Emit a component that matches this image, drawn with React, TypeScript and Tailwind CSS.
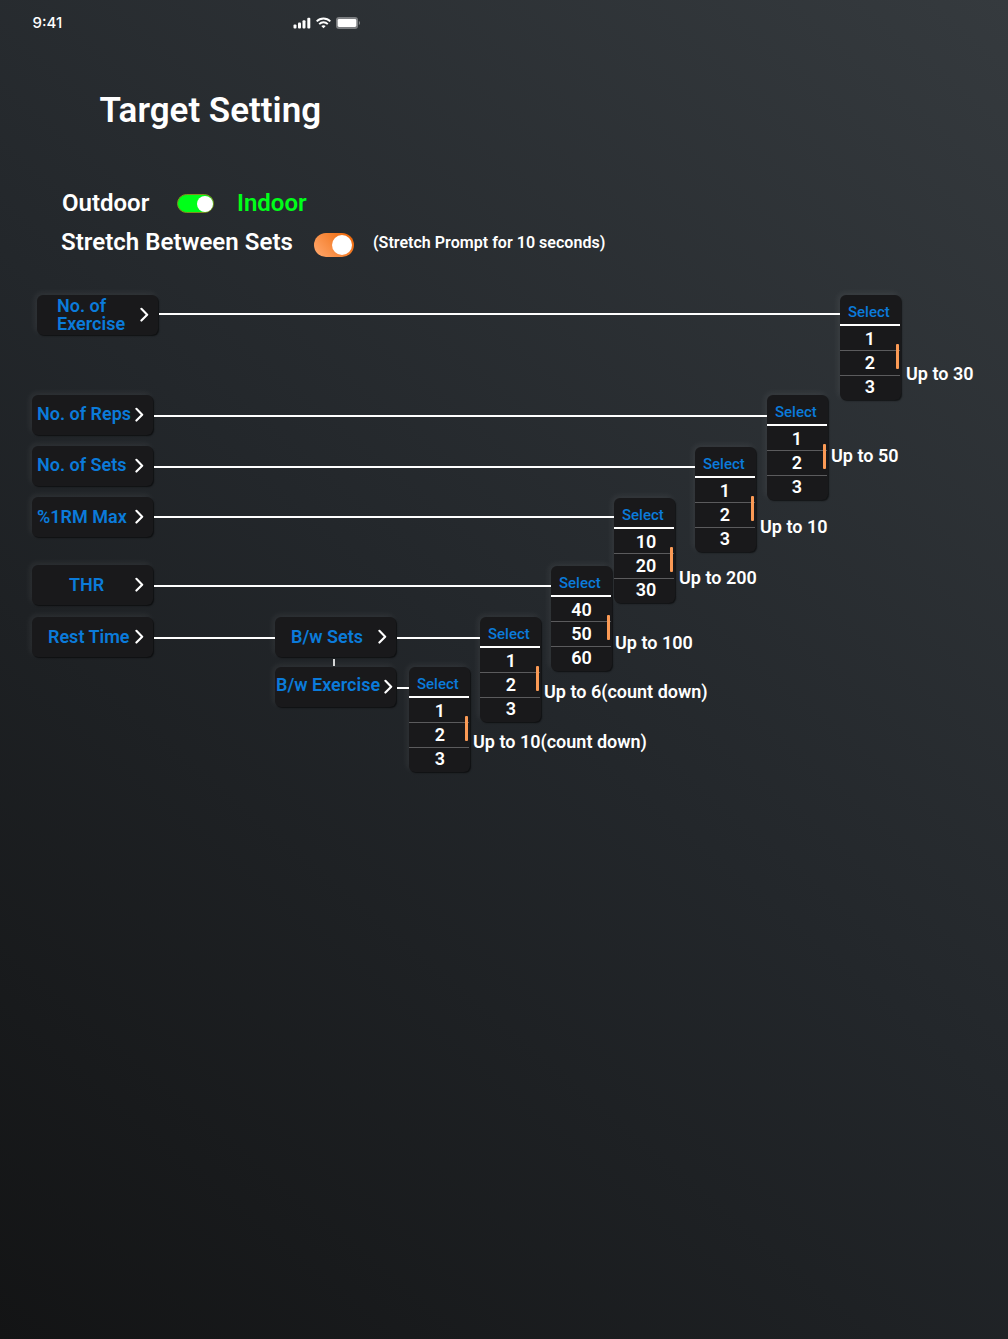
import React from "react";

const NODE_SHADOW = "shadow-[1px_1px_1.5px_rgba(0,0,0,0.65),-2px_-2px_6px_rgba(255,255,255,0.07)]";

function Chevron() {
  return (
    <svg width="9" height="15" viewBox="0 0 9 15" fill="none" className="shrink-0">
      <path d="M1.4 1.8L7.2 7.7L1.4 13.6" stroke="#fff" strokeWidth="2.1" strokeLinecap="round" strokeLinejoin="round" />
    </svg>
  );
}

type ButtonProps = { label: React.ReactNode; textClass: string; chevronClass?: string };

function NodeButton({ label, textClass, chevronClass = "mt-3 mr-[9px]" }: ButtonProps) {
  return (
    <button
      className={`flex h-10 w-[121px] shrink-0 items-start justify-between rounded-[6px] bg-[#19191b] text-left text-[18px] leading-[18px] font-semibold whitespace-nowrap text-[#0b7bda] ${NODE_SHADOW}`}
    >
      <span className={textClass}>{label}</span>
      <span className={chevronClass}>
        <Chevron />
      </span>
    </button>
  );
}

function Line({ className }: { className: string }) {
  return <div className={`h-[2px] shrink-0 bg-white ${className}`} />;
}

function SelectCard({ values, className = "" }: { values: number[]; className?: string }) {
  return (
    <div
      className={`relative h-[105px] w-[61px] shrink-0 rounded-[6px] bg-[#19191b] ${NODE_SHADOW} ${className}`}
    >
      <div className="h-[31px] w-[60px] border-b-2 border-white pt-[9px] pl-2 text-[15px] leading-4 font-medium text-[#0b7bda]">
        Select
      </div>
      <ul className="w-[60px] text-center text-[18px] font-semibold text-white">
        <li className="h-[25px] border-b border-[#5b5b5d] leading-[26px]">{values[0]}</li>
        <li className="h-[25px] border-b border-[#5b5b5d] leading-6">{values[1]}</li>
        <li className="h-6 leading-[22px]">{values[2]}</li>
      </ul>
      <div className="absolute top-[49px] left-[56px] h-[25px] w-[2.5px] rounded-[1px] bg-[#fb9a55]" />
    </div>
  );
}

function Limit({ children, className }: { children: string; className: string }) {
  return (
    <span className={`shrink-0 text-[18px] leading-5 font-semibold whitespace-nowrap text-white ${className}`}>
      {children}
    </span>
  );
}

export default function App() {
  return (
    <div className="h-[1339px] w-[1008px] overflow-hidden bg-[linear-gradient(220deg,#353a3e_0%,#23272b_50%,#131415_100%)] font-['Roboto',sans-serif] text-white">
      <header className="flex h-[93px] pl-[32.5px]">
        <span className="mt-[14px] w-[260.5px] font-['Inter',sans-serif] text-[15px] leading-[18px] font-medium">
          9:41
        </span>
        <div className="mt-[17px] flex h-3 items-center gap-[5px]">
          <svg width="18" height="12" viewBox="0 0 18 12" fill="#fff">
            <rect x="0.5" y="7.5" width="3" height="4" rx="1" />
            <rect x="5" y="5.5" width="3" height="6" rx="1" />
            <rect x="9.5" y="3.2" width="3" height="8.3" rx="1" />
            <rect x="14.3" y="0.7" width="3" height="10.8" rx="1" />
          </svg>
          <svg width="15" height="12" viewBox="0 0 15 12" fill="none" stroke="#fff" strokeWidth="1.9">
            <path d="M0.7 4.4C4.4 0.6 10.6 0.6 14.3 4.4" />
            <path d="M3.2 7.1C5.6 4.7 9.4 4.7 11.8 7.1" />
            <path d="M7.5 11.2L5.3 9C6.5 7.9 8.5 7.9 9.7 9Z" fill="#fff" stroke="none" />
          </svg>
          <svg width="25" height="12" viewBox="0 0 25 12" fill="none">
            <rect x="0" y="0" width="22" height="12" rx="3" fill="#fff" fillOpacity="0.38" />
            <rect x="1.7" y="2" width="18.6" height="8" rx="1.4" fill="#fff" />
            <path d="M22.8 4V8C23.6 7.7 24 6.9 24 6S23.6 4.3 22.8 4Z" fill="#fff" fillOpacity="0.4" />
          </svg>
        </div>
      </header>

      <h1 className="h-[98px] pl-[99.5px] text-[35px] leading-9 font-semibold">Target Setting</h1>

      <section className="flex h-[103px] flex-col text-[24px] leading-6 font-semibold">
        <div className="flex h-[39px] pl-[62px]">
          <span className="w-[115px]">Outdoor</span>
          <button className="mt-[3px] flex h-[19px] w-[37px] items-center justify-end rounded-full border border-[#7f8f1d] bg-[#00ff19] pr-0">
            <span className="size-4 rounded-full bg-white" />
          </button>
          <span className="ml-[23px] text-[#00ff19]">Indoor</span>
        </div>
        <div className="flex pl-[61px]">
          <span className="w-[253px] tracking-[0.04px]">Stretch Between Sets</span>
          <button className="mt-[3px] flex h-6 w-10 items-center justify-end rounded-full bg-[linear-gradient(50deg,#ffa365_10%,#ee6a0c_90%)] pr-[2px]">
            <span className="size-5 rounded-full bg-white" />
          </button>
          <span className="mt-px ml-[19px] text-[16px] tracking-[0.03px]">(Stretch Prompt for 10 seconds)</span>
        </div>
      </section>

      <main className="flex flex-col pt-px pl-8">
        <div className="flex h-[100px] items-start pl-[5px]">
          <NodeButton
            label={
              <>
                No. of
                <br />
                Exercise
              </>
            }
            textClass="mt-[2px] ml-5"
          />
          <Line className="mt-[18px] ml-px w-[681px]" />
          <SelectCard values={[1, 2, 3]} />
          <Limit className="mt-[69px] ml-[5px]">Up to 30</Limit>
        </div>
        <div className="flex h-[51px] items-start">
          <NodeButton label="No. of Reps" textClass="mt-[10px] ml-[5px]" />
          <Line className="mt-5 ml-px w-[613px]" />
          <SelectCard values={[1, 2, 3]} />
          <Limit className="mt-[51px] ml-[3px]">Up to 50</Limit>
        </div>
        <div className="flex h-[51px] items-start">
          <NodeButton label="No. of Sets" textClass="mt-[10px] ml-[5px]" />
          <Line className="mt-5 ml-px w-[541px]" />
          <SelectCard values={[1, 2, 3]} className="mt-px" />
          <Limit className="mt-[71px] ml-1">Up to 10</Limit>
        </div>
        <div className="flex h-[68px] items-start">
          <NodeButton label="%1RM Max" textClass="mt-[11px] ml-[5px]" />
          <Line className="mt-[19px] ml-px w-[460px]" />
          <SelectCard values={[10, 20, 30]} className="mt-px [&_li]:pl-1" />
          <Limit className="mt-[71px] ml-1">Up to 200</Limit>
        </div>
        <div className="flex h-[52px] items-start">
          <NodeButton label="THR" textClass="mt-[11px] ml-[37px]" />
          <Line className="mt-5 ml-px w-[397px]" />
          <SelectCard values={[40, 50, 60]} className="mt-px [&_li]:pl-px" />
          <Limit className="mt-[68px] ml-[3px]">Up to 100</Limit>
        </div>
        <div className="flex h-[50px] items-start">
          <NodeButton label="Rest Time" textClass="mt-[11px] ml-4" />
          <Line className="mt-5 ml-px w-[121px]" />
          <div className="flex h-[50px] flex-col items-center">
            <NodeButton label="B/w Sets" textClass="mt-[11px] ml-4" />
            <div className="mt-[2px] mr-1 h-[7px] w-[2px] bg-[#d4d5d6]" />
          </div>
          <Line className="mt-5 ml-px w-[83px]" />
          <SelectCard values={[1, 2, 3]} className="[&_li]:pl-[2px]" />
          <Limit className="mt-[65px] ml-[3px]">Up to 6(count down)</Limit>
        </div>
        <div className="flex items-start pl-[243px]">
          <NodeButton label="B/w Exercise" textClass="mt-[9px] ml-px" chevronClass="mt-3 -ml-1 mr-[3px]" />
          <Line className="mt-5 ml-px w-3" />
          <SelectCard values={[1, 2, 3]} className="[&_li]:pl-[2px]" />
          <Limit className="mt-[65px] ml-[3px]">Up to 10(count down)</Limit>
        </div>
      </main>
    </div>
  );
}
